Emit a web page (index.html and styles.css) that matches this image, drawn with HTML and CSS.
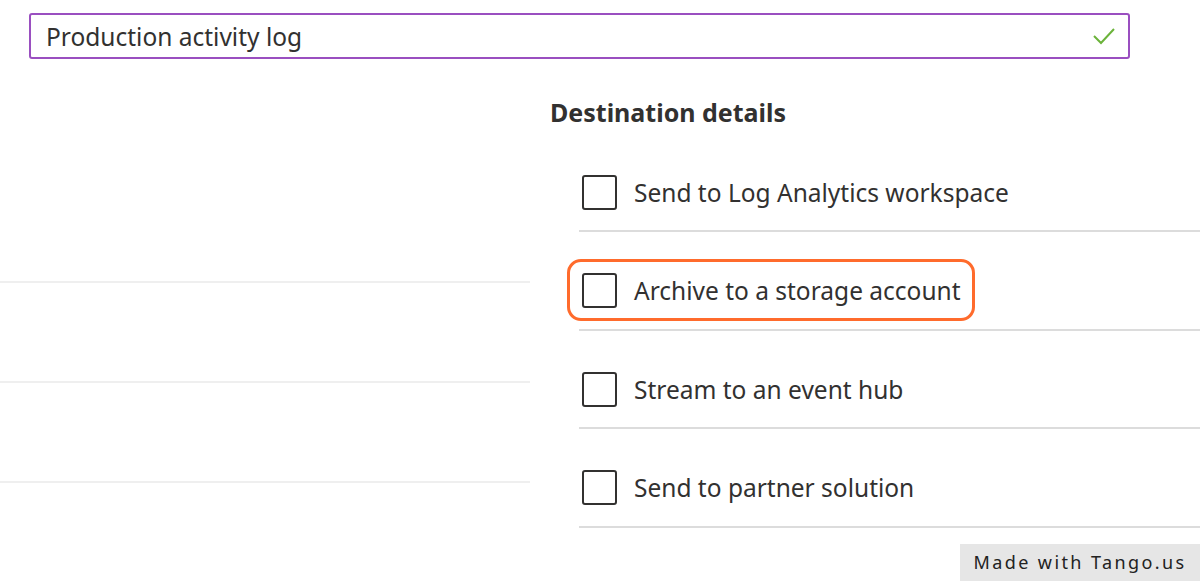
FILE: index.html
```html
<!DOCTYPE html>
<html lang="en">
<head>
    <meta charset="UTF-8">
    <title>Diagnostic setting</title>
    <link rel="stylesheet" href="styles.css">
</head>
<body>

    <div class="name-field">
        <span class="name-value">Production activity log</span>
        <svg class="valid-icon" width="24" height="20" viewBox="0 0 24 20">
            <polyline points="2,10 9,17 22,3" fill="none" stroke="#6bb33a" stroke-width="2"/>
        </svg>
    </div>

    <div class="cols">
        <div class="left">
            <div class="sep"></div>
            <div class="sep"></div>
            <div class="sep"></div>
        </div>

        <div class="right">
            <h2>Destination details</h2>
            <ul class="dest-list">
                <li><label class="opt"><span class="box"></span>Send to Log Analytics workspace</label></li>
                <li><label class="opt focus"><span class="box"></span>Archive to a storage account</label></li>
                <li><label class="opt"><span class="box"></span>Stream to an event hub</label></li>
                <li><label class="opt"><span class="box"></span>Send to partner solution</label></li>
            </ul>
        </div>
    </div>

    <div class="tango">Made with Tango.us</div>

</body>
</html>
```

FILE: styles.css
```css
body{
    margin: 0;
    font-family: "Noto Sans", "Open Sans", sans-serif;
    color: #323130;
    background: #fff;
    overflow: hidden;
}

.name-field{
    display: flex;
    align-items: center;
    justify-content: space-between;
    box-sizing: border-box;
    width: 1101px;
    height: 46px;
    margin: 13px 0 0 29px;
    padding: 0 12px 0 15px;
    border: 2px solid #9a4fc0;
    border-radius: 3px;
    font-size: 24.5px;
}

.cols{
    display: flex;
}
.left{
    width: 530px;
    padding-top: 222px;
}
.sep{
    height: 2px;
    margin-bottom: 98px;
    background: #efefef;
}

.right{
    flex: 1;
    margin-left: 20px;
}
h2{
    margin: 37px 0 0;
    font-size: 25px;
    line-height: 32px;
    font-weight: 700;
}

.dest-list{
    list-style: none;
    margin: 5.5px 0 0 29px;
    padding: 0;
}
.dest-list li{
    display: flex;
    padding: 41px 0 20.5px 3px;
    border-bottom: 2px solid #dcdcdc;
}
.opt{
    position: relative;
    display: flex;
    align-items: center;
    gap: 17px;
    height: 35px;
    font-size: 24.5px;
    line-height: 35px;
}
.box{
    box-sizing: border-box;
    width: 35px;
    height: 35px;
    border: 2px solid #323130;
    border-radius: 3px;
}
.focus:after{
    content: '';
    position: absolute;
    top: -14px;
    right: -14px;
    bottom: -13px;
    left: -15px;
    border: 3px solid #ff6b2c;
    border-radius: 14px;
}

.tango{
    position: absolute;
    right: 0;
    bottom: 0;
    width: 240px;
    height: 37px;
    line-height: 37px;
    text-align: center;
    background: #e6e6e6;
    color: #222;
    font-size: 18px;
    letter-spacing: 2.4px;
}
```
